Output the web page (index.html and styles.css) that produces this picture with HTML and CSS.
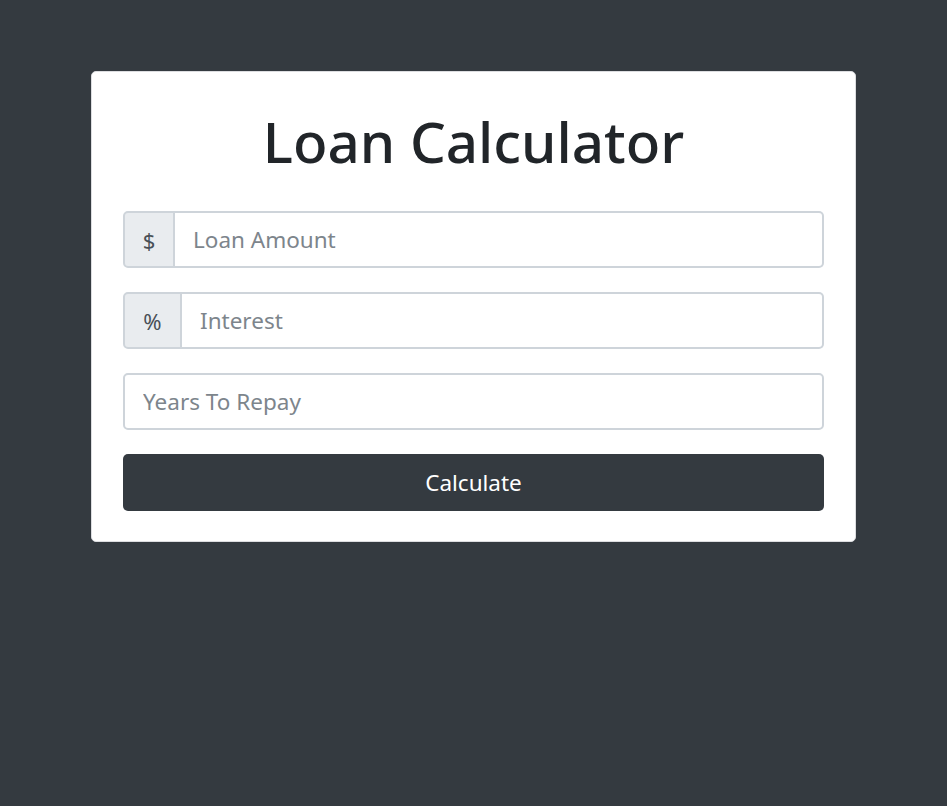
FILE: index.html
```html
<!DOCTYPE html>
<html lang="en">
<head>
    <meta charset="utf-8">
    <title>Loan Calculator</title>
    <link rel="stylesheet" href="styles.css">
</head>
<body>
<div class="card">
    <h1>Loan Calculator</h1>

    <form id="loan-form">
        <div class="form-group">
            <div class="input-group">
                <span class="input-group-text addon-dollar">$</span>
                <input type="number" class="form-control" id="amount" placeholder="Loan Amount">
            </div>
        </div>

        <div class="form-group">
            <div class="input-group">
                <span class="input-group-text addon-percent">%</span>
                <input type="number" class="form-control" id="interest" placeholder="Interest">
            </div>
        </div>

        <div class="form-group">
            <input type="number" class="form-control standalone" id="years" placeholder="Years To Repay">
        </div>

        <button type="submit" class="btn-calc">Calculate</button>
    </form>
</div>
</body>
</html>
```

FILE: styles.css
```css
body {
    margin: 0;
    background-color: #343a40;
    font-family: "Noto Sans", "Open Sans", Arial, sans-serif;
    color: #212529;
}

.card {
    width: 765px;
    box-sizing: border-box;
    margin: 71px auto 0;
    padding: 31px 31px 30px;
    background-color: #fff;
    border: 1px solid #dcdde0;
    border-radius: 5px;
}

h1 {
    margin: 0 0 30px;
    font-size: 56.5px;
    font-weight: 500;
    line-height: 78px;
    text-align: center;
    color: #212529;
}

.form-group {
    margin-bottom: 24px;
}

.input-group {
    display: flex;
    height: 57px;
}

.input-group-text {
    display: flex;
    align-items: center;
    justify-content: center;
    box-sizing: border-box;
    background-color: #e9ecef;
    border: 2px solid #ced4da;
    border-radius: 5px 0 0 5px;
    color: #495057;
    font-size: 22px;
}

.addon-dollar {
    width: 52px;
}

.addon-percent {
    width: 59px;
}

.form-control {
    flex: 1;
    min-width: 0;
    height: 57px;
    box-sizing: border-box;
    padding: 0 18px;
    border: 2px solid #ced4da;
    border-left: none;
    border-radius: 0 5px 5px 0;
    font-family: inherit;
    font-size: 22.5px;
    color: #495057;
    background-color: #fff;
    outline: none;
}

.form-control.standalone {
    width: 100%;
    border-left: 2px solid #ced4da;
    border-radius: 5px;
}

.form-control::placeholder {
    color: #7d858c;
}

.btn-calc {
    display: block;
    width: 100%;
    height: 57px;
    border: none;
    border-radius: 5px;
    background-color: #343a40;
    color: #fff;
    font-family: inherit;
    font-size: 22.5px;
    cursor: pointer;
}
```
